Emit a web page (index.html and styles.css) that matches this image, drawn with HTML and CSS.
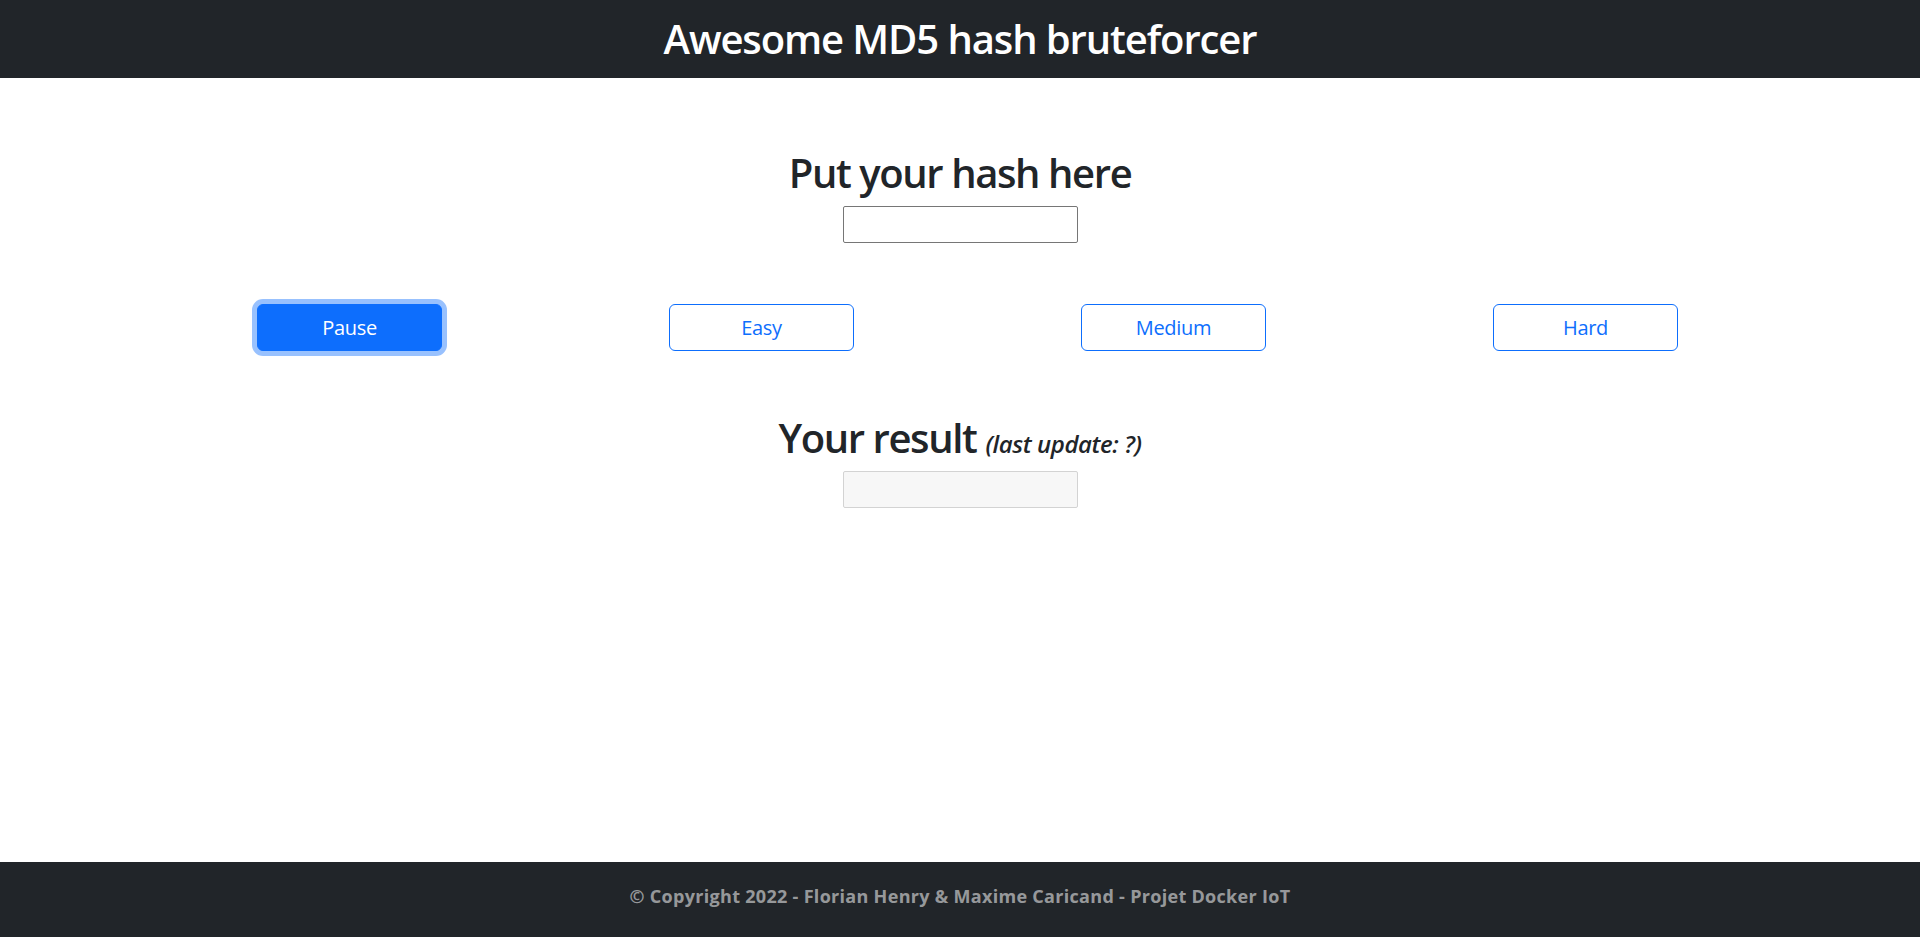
FILE: index.html
```html
<!DOCTYPE html>
<html lang="en">
<head>
<meta charset="utf-8">
<title>Awesome MD5 hash bruteforcer</title>
<link rel="stylesheet" href="styles.css">
</head>
<body>
<div class="page">
  <header class="topbar">
    <h1 class="topbar-title">Awesome MD5 hash bruteforcer</h1>
  </header>
  <main class="main">
    <section class="block hash-block">
      <h2 class="block-title">Put your hash here</h2>
      <input class="field" type="text">
    </section>
    <div class="choices">
      <div class="choice"><button class="btn btn-primary">Pause</button></div>
      <div class="choice"><button class="btn btn-outline">Easy</button></div>
      <div class="choice"><button class="btn btn-outline">Medium</button></div>
      <div class="choice"><button class="btn btn-outline">Hard</button></div>
    </div>
    <section class="block result-block">
      <h2 class="block-title">Your result <small class="update">(last update: ?)</small></h2>
      <input class="field field-disabled" type="text" disabled>
    </section>
  </main>
  <footer class="footer">
    <p class="footer-text">© Copyright 2022 - Florian Henry &amp; Maxime Caricand - Projet Docker IoT</p>
  </footer>
</div>
</body>
</html>
```

FILE: styles.css
```css
html, body {
  margin: 0;
  padding: 0;
}
body {
  font-family: "Open Sans", "Noto Sans", "Liberation Sans", sans-serif;
  color: #212529;
  background: #fff;
}
.page {
  min-height: 100vh;
  display: flex;
  flex-direction: column;
}
.topbar {
  background: #212529;
  height: 78px;
  display: flex;
  align-items: center;
  justify-content: center;
}
.topbar-title {
  margin: 0;
  color: #fff;
  font-size: 40px;
  font-weight: 600;
  line-height: 1.2;
  letter-spacing: -1.1px;
}
.main {
  flex: 1;
  display: flex;
  flex-direction: column;
}
.block {
  display: flex;
  flex-direction: column;
  align-items: center;
}
.hash-block {
  margin-top: 71px;
}
.result-block {
  margin-top: 63px;
}
.block-title {
  margin: 0 0 9px;
  font-size: 40px;
  font-weight: 600;
  line-height: 1.2;
  letter-spacing: -1.4px;
}
.update {
  font-size: 24px;
  font-style: italic;
  font-weight: 600;
  letter-spacing: -0.4px;
}
.field {
  width: 235px;
  height: 37px;
  box-sizing: border-box;
  border: 1px solid #767676;
  border-radius: 2px;
  background: #fff;
  margin: 0;
  padding: 1px 2px;
  font: inherit;
}
.field-disabled {
  background: #f7f7f7;
  border-color: #d3d3d3;
}
.choices {
  width: 1663px;
  box-sizing: border-box;
  padding-left: 15px;
  margin: 61px auto 0;
  display: grid;
  grid-template-columns: repeat(4, 412px);
}
.choice {
  display: flex;
  justify-content: center;
}
.btn {
  width: 185px;
  height: 47px;
  box-sizing: border-box;
  padding: 0;
  font-family: inherit;
  font-size: 20px;
  font-weight: 400;
  letter-spacing: -0.3px;
  border-radius: 6px;
  border: 1px solid #0d6efd;
  cursor: pointer;
}
.btn-primary {
  background: #0d6efd;
  color: #fff;
  box-shadow: 0 0 0 5px rgba(49, 132, 253, 0.5);
}
.btn-outline {
  background: #fff;
  color: #0d6efd;
}
.footer {
  background: #212529;
  height: 75px;
  box-sizing: border-box;
  padding-bottom: 8px;
  display: flex;
  align-items: center;
  justify-content: center;
}
.footer-text {
  margin: 0;
  color: rgba(255, 255, 255, 0.55);
  font-size: 18px;
  font-weight: 700;
  letter-spacing: 0.3px;
}
```
